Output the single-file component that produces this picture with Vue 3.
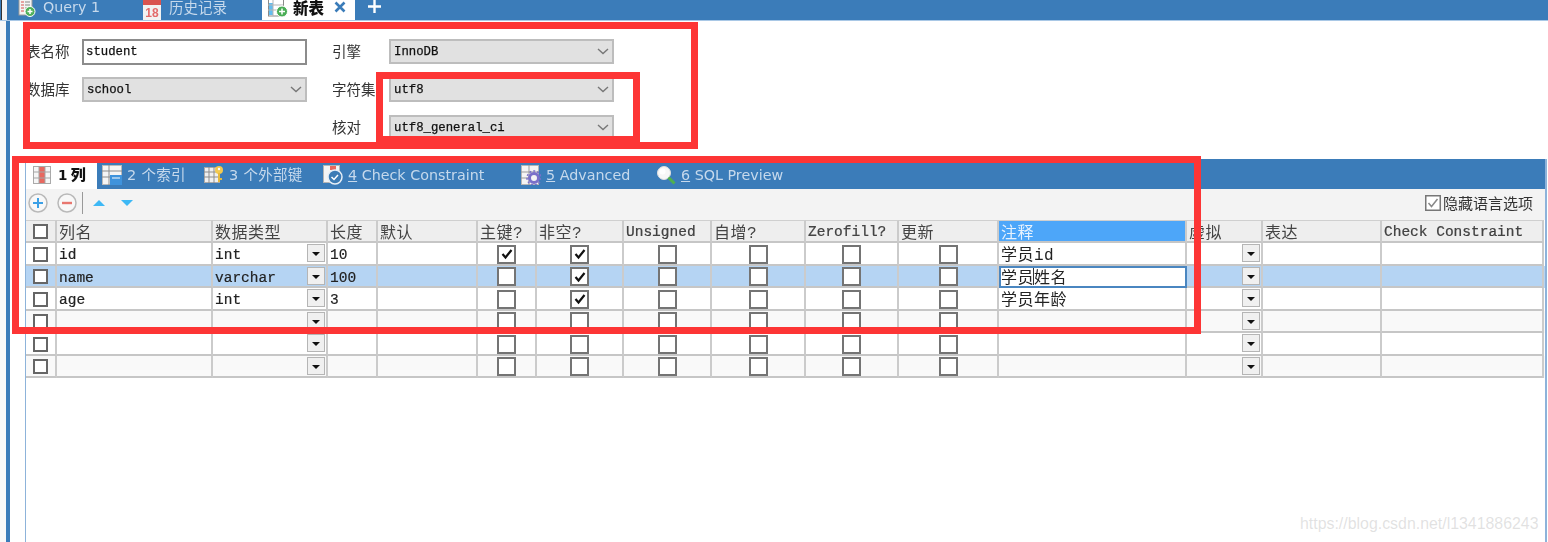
<script setup>
const cols = [
  { t: '', k: 'sel' },
  { t: '列名', k: 'text', f: 'name' },
  { t: '数据类型', k: 'combo', f: 'type' },
  { t: '长度', k: 'text', f: 'len' },
  { t: '默认', k: 'text', f: 'def' },
  { t: '主键?', k: 'check', f: 'pk' },
  { t: '非空?', k: 'check', f: 'nn' },
  { t: 'Unsigned', k: 'check', f: 'un' },
  { t: '自增?', k: 'check', f: 'ai' },
  { t: 'Zerofill?', k: 'check', f: 'zf' },
  { t: '更新', k: 'check', f: 'up' },
  { t: '注释', k: 'text', f: 'note', active: true },
  { t: '虚拟', k: 'combo', f: 'virt' },
  { t: '表达', k: 'text', f: 'expr' },
  { t: 'Check Constraint', k: 'text', f: 'cc' }
]
const rows = [
  { name: 'id', type: 'int', len: '10', pk: true, nn: true, note: '学员id' },
  { name: 'name', type: 'varchar', len: '100', nn: true, note: '学员姓名', selected: true },
  { name: 'age', type: 'int', len: '3', nn: true, note: '学员年龄' },
  { alt: true },
  {},
  { alt: true }
]
const hasCjk = (s) => /[\u4e00-\u9fff]/.test(s || '')
</script>

<template>
  <div class="page">
    <header class="topbar">
      <div class="corner"></div>
      <div class="ttab first">
        <svg width="18" height="17" viewBox="0 0 18 17"><rect x="1" y="-2" width="13" height="17" fill="#f4f4f4" stroke="#9a9a9a"/><path d="M3 2h3M3 5h3M3 8h3M3 11h3" stroke="#d9534f"/><path d="M7 2h5M7 5h5M7 8h2" stroke="#888"/><circle cx="12" cy="11.500" r="5" fill="#4fb05a" stroke="#fff"/><path d="M9.500 11.500h5M12 9v5" stroke="#fff" stroke-width="1.500"/></svg>
        <span class="ttxt">Query 1</span>
      </div>
      <div class="ttab second">
        <svg width="19" height="20" viewBox="0 0 19 20"><rect x="0" y="2" width="18" height="18" fill="#f2f2f2"/><rect x="0" y="0" width="18" height="5" fill="#d9534f"/><text x="9" y="17" font-size="12" font-weight="700" text-anchor="middle" fill="#e36a6a" font-family="Liberation Sans">18</text></svg>
        <span class="ttxt cjk">历史记录</span>
      </div>
      <div class="ttab active">
        <svg width="20" height="18" viewBox="0 0 20 18"><rect x="0.500" y="-1" width="15" height="17" fill="#fff" stroke="#8a8a8a"/><rect x="1" y="3" width="4" height="12" fill="#63bdf0"/><path d="M5 0v16M0 5h15M0 10h15" stroke="#b5b5b5"/><circle cx="14" cy="11.500" r="5.500" fill="#49ad55" stroke="#fff"/><path d="M11 11.500h6M14 8.500v6" stroke="#fff" stroke-width="1.500"/></svg>
        <span class="atxt">新表</span>
        <svg class="close" width="12" height="12" viewBox="0 0 12 12"><path d="M1.500 1.500l9 9M10.500 1.500l-9 9" stroke="#3b7cb9" stroke-width="2.600"/></svg>
      </div>
      <svg class="plus" width="13" height="13" viewBox="0 0 13 13"><path d="M0 6.500h13M6.500 0v13" stroke="#fff" stroke-width="2.400"/></svg>
    </header>

    <div class="body">
      <div class="gutter"></div>
      <div class="rail"></div>
      <main class="content">
        <section class="form">
          <label class="lbl">表名称</label>
          <div class="input">student</div>
          <label class="lbl right">引擎</label>
          <div class="select">InnoDB<svg width="12" height="7" viewBox="0 0 12 7"><path d="M1 1l5 4.500L11 1" fill="none" stroke="#777" stroke-width="1.400"/></svg></div>
          <label class="lbl">数据库</label>
          <div class="select">school<svg width="12" height="7" viewBox="0 0 12 7"><path d="M1 1l5 4.500L11 1" fill="none" stroke="#777" stroke-width="1.400"/></svg></div>
          <label class="lbl right">字符集</label>
          <div class="select">utf8<svg width="12" height="7" viewBox="0 0 12 7"><path d="M1 1l5 4.500L11 1" fill="none" stroke="#777" stroke-width="1.400"/></svg></div>
          <label class="lbl right">核对</label>
          <div class="select">utf8_general_ci<svg width="12" height="7" viewBox="0 0 12 7"><path d="M1 1l5 4.500L11 1" fill="none" stroke="#777" stroke-width="1.400"/></svg></div>
        </section>

        <section class="panel">
          <nav class="ptabs">
            <div class="ptab on">
              <svg width="18" height="18" viewBox="0 0 18 18"><rect x="0.500" y="0.500" width="17" height="17" fill="#f6f6f6" stroke="#aaa"/><rect x="6" y="1" width="6" height="16" fill="#e8685f"/><path d="M0 6h18M0 12h18M6 0v18M12 0v18" stroke="#a5a5a5"/></svg>
              <span class="ont"><b>1</b> 列</span>
            </div>
            <div class="ptab t2">
              <svg width="20" height="20" viewBox="0 0 20 20"><rect x="0.500" y="0.500" width="19" height="19" fill="#f5f5f5" stroke="#bbb"/><path d="M0 6h20M0 12h10M7 0v20" stroke="#8d8d8d"/><rect x="8" y="10" width="12" height="10" fill="#3f93dc"/><path d="M10 13h8" stroke="#fff"/></svg>
              <span class="ptx cjk"><i>2</i> 个索引</span>
            </div>
            <div class="ptab t3">
              <svg width="20" height="20" viewBox="0 0 20 20"><rect x="0.500" y="2.500" width="15" height="15" fill="#f0f0f0" stroke="#aaa"/><path d="M0 7h16M0 12h16M5 2v16M10 2v16" stroke="#8d8d8d"/><circle cx="15" cy="5" r="4" fill="#f3c94f"/><circle cx="15" cy="4" r="1.200" fill="#fff"/><path d="M15 8v9M15 14h3" stroke="#e6b93e" stroke-width="2"/></svg>
              <span class="ptx cjk"><i>3</i> 个外部键</span>
            </div>
            <div class="ptab t4">
              <svg width="20" height="20" viewBox="0 0 20 20"><rect x="0.500" y="0.500" width="16" height="17" fill="#f4f4f4" stroke="#b5b5b5"/><rect x="7" y="1" width="6" height="4" fill="#e8685f"/><circle cx="12" cy="12" r="7" fill="#3d7cb5" stroke="#e6eef6" stroke-width="1.500"/><path d="M8.500 12l2.500 2.500 4-4.500" fill="none" stroke="#fff" stroke-width="1.500"/></svg>
              <span class="ptx"><u>4</u> Check Constraint</span>
            </div>
            <div class="ptab t5">
              <svg width="20" height="20" viewBox="0 0 20 20"><rect x="0.500" y="0.500" width="17" height="19" fill="#f4f4f4" stroke="#b5b5b5"/><path d="M0 7h18M0 13h8M8 0v20" stroke="#999"/><circle cx="13" cy="13" r="4.500" fill="none" stroke="#7a70c9" stroke-width="3"/><circle cx="13" cy="13" r="7" fill="none" stroke="#7a70c9" stroke-width="1.500" stroke-dasharray="2 2"/></svg>
              <span class="ptx"><u>5</u> Advanced</span>
            </div>
            <div class="ptab t6">
              <svg width="20" height="20" viewBox="0 0 20 20"><circle cx="8" cy="8" r="6.500" fill="#f7f7f7" stroke="#dfdfdf"/><circle cx="6.500" cy="6.500" r="3" fill="#fff"/><path d="M12.500 12.500l6 6" stroke="#4fb04f" stroke-width="3"/></svg>
              <span class="ptx"><u>6</u> SQL Preview</span>
            </div>
          </nav>

          <div class="toolbar">
            <svg width="20" height="20" viewBox="0 0 20 20"><circle cx="10" cy="10" r="9" fill="#f8f8f8" stroke="#b9b9b9" stroke-width="1.500"/><path d="M5 10h10M10 5v10" stroke="#3ca0e6" stroke-width="2"/></svg>
            <svg class="minus" width="20" height="20" viewBox="0 0 20 20"><circle cx="10" cy="10" r="9" fill="#f8f8f8" stroke="#b9b9b9" stroke-width="1.500"/><path d="M5 10h10" stroke="#e8776f" stroke-width="2.400"/></svg>
            <span class="sep"></span>
            <span class="tri up"></span>
            <span class="tri down"></span>
            <div class="hide">
              <svg width="16" height="16" viewBox="0 0 16 16"><rect x="0.750" y="0.750" width="14.500" height="14.500" fill="#fff" stroke="#777" stroke-width="1.500"/><path d="M3.500 8l3 3.500 6-7.500" fill="none" stroke="#888" stroke-width="1.500"/></svg>
              <span>隐藏语言选项</span>
            </div>
          </div>

          <div class="grid">
            <div class="row head">
              <div v-for="c in cols" :key="c.t" class="cell" :class="{ act: c.active, big: hasCjk(c.t) }">
                <span v-if="c.k === 'sel'" class="sel"></span>
                <template v-else>{{ c.t }}</template>
              </div>
            </div>
            <div v-for="(r, i) in rows" :key="i" class="row data" :class="{ selected: r.selected, alt: r.alt }">
              <div
                v-for="c in cols"
                :key="c.t"
                class="cell"
                :class="{ big: hasCjk(r[c.f]), center: c.k === 'check' || c.k === 'sel', edit: r.selected && c.active }"
              >
                <span v-if="c.k === 'sel'" class="sel"></span>
                <span v-else-if="c.k === 'check'" class="box">
                  <svg v-if="r[c.f]" width="12" height="12" viewBox="0 0 12 12"><path d="M1.500 6l3 3.500L10.500 2" fill="none" stroke="#111" stroke-width="2.200"/></svg>
                </span>
                <template v-else-if="r.selected && c.active">学员<em class="caret"></em>姓名</template>
                <template v-else>{{ r[c.f] }}</template>
                <span v-if="c.k === 'combo'" class="drop"><span></span></span>
              </div>
            </div>
          </div>
        </section>
      </main>
    </div>

    <div class="mark box1"></div>
    <div class="mark box2"></div>
    <div class="mark box3"></div>
    <div class="wm">https://blog.csdn.net/l1341886243</div>
  </div>
</template>

<style scoped>
.page {
  position: relative;
  width: 1548px;
  height: 542px;
  overflow: hidden;
  background: #fff;
  display: flex;
  flex-direction: column;
  font-family: "Liberation Mono", "Noto Sans CJK SC", monospace;
  color: #222;
}
.topbar {
  height: 21px;
  box-sizing: border-box;
  flex: none;
  background: #3b7cb9;
  border-bottom: 1px solid #a9c8e6;
  display: flex;
  align-items: flex-start;
  overflow: hidden;
  filter: blur(.3px);
}
.corner {
  width: 6px;
  height: 20px;
  box-sizing: border-box;
  background: #f4f4f4;
  border-left: 1px solid #333;
  margin-left: 1px;
  margin-right: -1px;
}
.ttab { display: flex; align-items: flex-start; height: 20px; }
.first { margin-left: 12px; width: 125px; gap: 7px; }
.second { gap: 7px; width: 119px; }
.ttxt {
  font: 14.300px/14px "DejaVu Sans", sans-serif;
  color: #c6d9ec;
}
.ttxt.cjk { font: 14.500px/14px "Noto Sans CJK SC", sans-serif; }
.active {
  width: 93px;
  box-sizing: border-box;
  background: #fff;
  padding-left: 6px;
  gap: 5px;
}
.atxt { font: 900 15.500px/15px "Noto Sans CJK SC", sans-serif; color: #111; width: 34px; }
.close { margin-top: 1px; margin-left: 2px; }
.plus { margin-left: 13px; margin-top: 0; }

.body { flex: 1; display: flex; min-height: 0; filter: blur(.3px); }
.gutter { width: 6px; background: #f8f8f8; flex: none; }
.rail { width: 4px; background: #3b7cb9; flex: none; }
.content { flex: 1; min-width: 0; display: flex; flex-direction: column; }

.form {
  display: grid;
  grid-template-columns: 56px 225px 25px 57px 225px;
  grid-template-rows: 25px 25px 25px;
  row-gap: 13px;
  padding: 18px 0 0 16px;
  align-items: start;
}
.lbl { font: 14.500px/23px "Noto Sans CJK SC", sans-serif; color: #333; white-space: nowrap; }
.lbl.right { grid-column: 4; }
.input, .select {
  height: 25px;
  box-sizing: border-box;
  display: flex;
  align-items: center;
  font-size: 12.300px;
  color: #111;
  -webkit-text-stroke: .25px #111;
}
.input { border: 2px solid #8c8c8c; padding-left: 2px; background: #fff; height: 26px; }
.select {
  border: 2px solid #bdbdbd;
  background: #e1e1e1;
  padding: 0 3px 0 3px;
  justify-content: space-between;
}

.panel {
  flex: 1;
  margin: 19px 1px 0 15px;
  box-sizing: border-box;
  border-left: 1px solid #8db3da;
  border-right: 2px solid #8db3da;
  min-height: 0;
  display: flex;
  flex-direction: column;
}
.ptabs {
  height: 30px;
  flex: none;
  box-sizing: border-box;
  background: #3b7cb9;
  display: flex;
  align-items: flex-end;
}
.ptab { height: 26px; display: flex; align-items: center; gap: 5px; flex: none; padding-bottom: 3px; box-sizing: border-box; }
.ptab svg { flex: none; }
.on {
  width: 71px;
  background: #fff;
  box-sizing: border-box;
  padding-left: 7px;
  gap: 7px;
}
.ont { font: 900 15px/18px "Noto Sans CJK SC", sans-serif; color: #111; white-space: nowrap; }
.ont b { font-family: "DejaVu Sans", sans-serif; font-size: 13.500px; }
.t2 { margin-left: 5px; width: 102px; }
.t3 { width: 119px; }
.t4 { width: 198px; }
.t5 { width: 135px; }
.ptx {
  font: 14.300px/18px "DejaVu Sans", sans-serif;
  color: #c6d9ec;
  white-space: nowrap;
}
.ptx.cjk { font-family: "DejaVu Sans", "Noto Sans CJK SC", sans-serif; font-size: 14.500px; letter-spacing: .3px; }
.ptx i { font-style: normal; }

.toolbar {
  height: 31px;
  flex: none;
  background: #f3f3f3;
  display: flex;
  align-items: center;
  padding: 0 12px 4px 2px;
  box-sizing: border-box;
}
.minus { margin-left: 9px; }
.sep { width: 1px; height: 22px; background: #999; margin-left: 5px; }
.tri { width: 0; height: 0; border-left: 6px solid transparent; border-right: 6px solid transparent; }
.up { border-bottom: 6px solid #3db8f5; margin-left: 10px; }
.down { border-top: 6px solid #3db8f5; margin-left: 16px; }
.hide {
  margin-left: auto;
  display: flex;
  align-items: center;
  gap: 2px;
  font: 15px/18px "Noto Sans CJK SC", sans-serif;
  color: #333;
}

.grid { flex: none; }
.row {
  display: grid;
  grid-template-columns: 31px 156px 115px 50px 100px 59px 87px 88px 94px 93px 100px 188px 76px 119px 162px;
}
.head { height: 23px; }
.data { height: 22.500px; }
.alt { background: #f9f9f9; }
.selected { background: #b5d4f3; }
.cell {
  box-sizing: border-box;
  border-right: 2px solid #cbcbcb;
  border-bottom: 2px solid #c6c6c6;
  padding: 4px 0 0 2px;
  display: flex;
  align-items: center;
  position: relative;
  font-size: 14.500px;
  -webkit-text-stroke: .2px #222;
  white-space: nowrap;
  min-width: 0;
  overflow: hidden;
}
.data .big { padding-top: 0; -webkit-text-stroke: 0; }
.head .cell { background: #eeeeee; border-top: 1px solid #cfcfcf; color: #444; padding-top: 2px; }
.big { font-size: 16px; letter-spacing: .5px; }
.head .big { padding-top: 0; padding-bottom: 1px; -webkit-text-stroke: 0; }
.head .act { background: #4da6f9; color: #e6f2fe; }
.data .center { justify-content: center; padding: 2px 0 0; }
.head .cell:first-child { justify-content: center; padding: 0; }
.sel {
  width: 15px;
  height: 15px;
  box-sizing: border-box;
  border: 2px solid #666;
  background: #fff;
}
.box {
  width: 19px;
  height: 19px;
  box-sizing: border-box;
  border: 2px solid #747474;
  background: #fff;
  display: flex;
  align-items: center;
  justify-content: center;
}
.drop {
  position: absolute;
  right: 1px;
  top: 1px;
  width: 18px;
  height: 18px;
  box-sizing: border-box;
  border: 1.500px solid #b5b5b5;
  background: #f0f0f0;
  display: flex;
  align-items: center;
  justify-content: center;
}
.drop span {
  width: 0;
  height: 0;
  border-left: 4px solid transparent;
  border-right: 4px solid transparent;
  border-top: 4px solid #111;
  margin-top: 2px;
}
.edit {
  background: #fff;
  outline: 2px solid #4a86c0;
  outline-offset: -2px;
}
.caret { display: inline-block; width: 1px; height: 18px; background: #333; margin: 0 0 0 -1px; }

.mark { position: absolute; box-sizing: border-box; border: 7px solid #fd3535; pointer-events: none; }
.box1 { left: 23px; top: 22px; width: 675px; height: 127px; }
.box2 { left: 376px; top: 72px; width: 264px; height: 71px; }
.box3 { left: 12px; top: 156px; width: 1189px; height: 178px; }
.wm {
  position: absolute;
  left: 1300px;
  top: 514px;
  font: 15.900px/20px "Liberation Sans", sans-serif;
  color: rgba(170, 170, 170, .35);
  white-space: nowrap;
}
</style>
